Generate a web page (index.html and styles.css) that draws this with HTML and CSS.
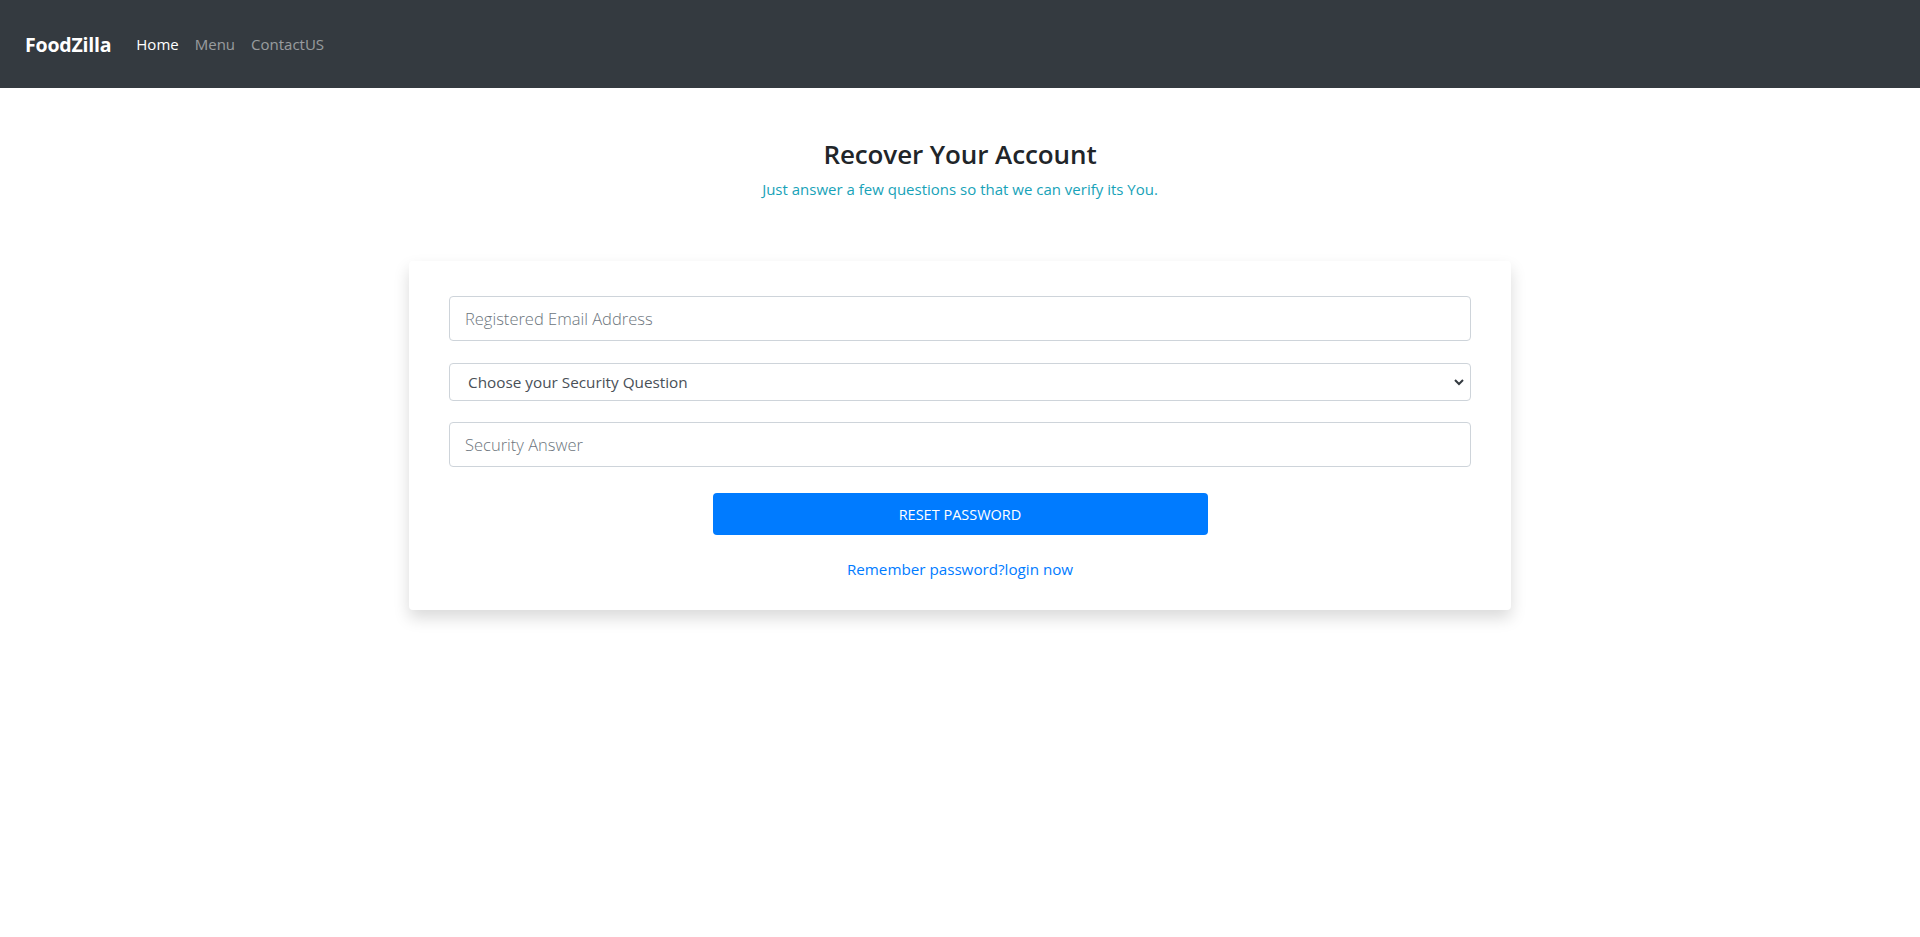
FILE: index.html
```html
<!DOCTYPE html>
<html lang="en">
<head>
<meta charset="utf-8">
<title>FoodZilla - Recover Your Account</title>
<link rel="stylesheet" href="styles.css">
</head>
<body>
<nav class="navbar">
  <a class="brand" href="#">FoodZilla</a>
  <ul class="nav-links">
    <li><a class="nav-link active" href="#">Home</a></li>
    <li><a class="nav-link" href="#">Menu</a></li>
    <li><a class="nav-link" href="#">ContactUS</a></li>
  </ul>
</nav>
<main class="page">
  <header class="intro">
    <h3 class="title">Recover Your Account</h3>
    <p class="subtitle">Just answer a few questions so that we can verify its You.</p>
  </header>
  <section class="card">
    <form class="form">
      <input class="field field-lg" type="email" placeholder="Registered Email Address">
      <div class="select-wrap">
        <select class="field field-select">
          <option>Choose your Security Question</option>
        </select>
        <svg class="chevron" width="10" height="8" viewBox="0 0 10 8"><path d="M1 2 L5 6 L9 2" fill="none" stroke="#343a40" stroke-width="2"/></svg>
      </div>
      <input class="field field-lg" type="text" placeholder="Security Answer">
      <button class="btn" type="button">RESET PASSWORD</button>
      <a class="login-link" href="#">Remember password?login now</a>
    </form>
  </section>
</main>
</body>
</html>
```
FILE: styles.css
```css
* { box-sizing: border-box; }
body {
  margin: 0;
  font-family: "Open Sans", "Noto Sans", sans-serif;
  color: #212529;
  background: #fff;
}
.navbar {
  height: 88px;
  background: #343a40;
  display: flex;
  align-items: center;
  padding: 0 25px;
}
.brand {
  color: #fff;
  font-weight: 700;
  font-size: 19.5px;
  text-decoration: none;
  margin-right: 17px;
  letter-spacing: -0.2px;
}
.nav-links {
  list-style: none;
  margin: 0;
  padding: 0;
  display: flex;
}
.nav-link {
  display: block;
  padding: 8px 8px;
  font-size: 15px;
  color: rgba(255,255,255,.5);
  text-decoration: none;
}
.nav-link.active { color: #fff; }
.page {
  display: flex;
  flex-direction: column;
  align-items: center;
  padding-bottom: 40px;
}
.intro {
  text-align: center;
  margin-top: 49px;
}
.title {
  margin: 0;
  font-size: 26px;
  font-weight: 600;
  line-height: 34px;
  letter-spacing: -0.1px;
}
.subtitle {
  margin: 6px 0 0;
  font-size: 15px;
  line-height: 24px;
  color: #17a2b8;
}
.card {
  margin-top: 60px;
  width: 1102px;
  background: #fff;
  border-radius: 4px;
  box-shadow: 0 .5rem 1rem rgba(0,0,0,.15);
  padding: 35px 40px 29px;
}
.form {
  display: flex;
  flex-direction: column;
  align-items: center;
}
.field {
  width: 100%;
  border: 1px solid #ced4da;
  border-radius: 4px;
  font-family: inherit;
  background: #fff;
  outline: none;
}
.field-lg {
  height: 45px;
  padding: 0 15px;
  font-size: 16.5px;
  font-weight: 300;
  color: #495057;
}
.field-lg::placeholder {
  color: #6c757d;
  font-weight: 300;
}
.field-lg + .select-wrap { margin-top: 22px; }
.select-wrap {
  width: 100%;
  position: relative;
  margin-bottom: 21px;
}
.field-select {
  height: 38px;
  padding: 0 18px;
  font-size: 15.3px;
  color: #495057;
  appearance: none;
  -webkit-appearance: none;
}
.chevron {
  position: absolute;
  right: 7px;
  top: 15px;
  pointer-events: none;
}
.btn {
  margin-top: 26px;
  width: 495px;
  height: 42px;
  border: none;
  border-radius: 4px;
  background: #007bff;
  color: #fff;
  font-family: inherit;
  font-size: 14.5px;
  cursor: pointer;
}
.login-link {
  margin-top: 22px;
  font-size: 15.2px;
  line-height: 24px;
  color: #007bff;
  text-decoration: none;
}
```
